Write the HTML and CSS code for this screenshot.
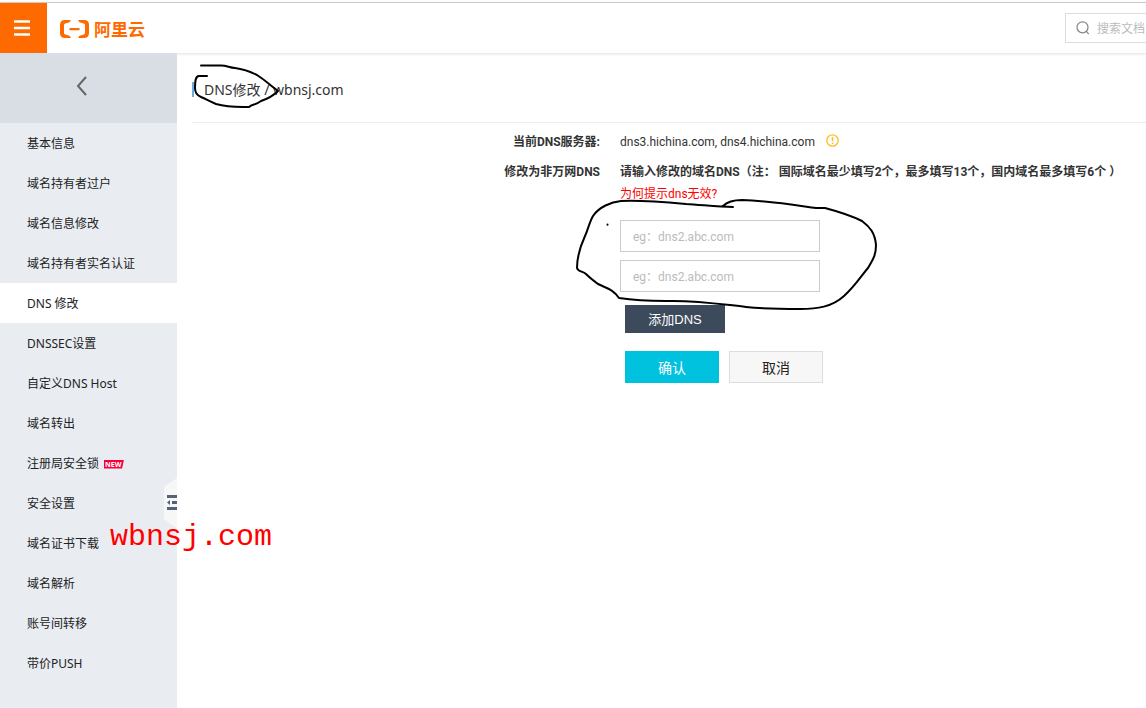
FILE: index.html
```html
<!DOCTYPE html>
<html lang="zh-CN">
<head>
<meta charset="utf-8">
<title>DNS修改</title>
<link rel="stylesheet" href="styles.css">
</head>
<body>
<header class="topbar">
  <button class="menu-btn" aria-label="菜单"><svg width="16" height="16" viewBox="0 0 16 16"><path d="M0 1.500h16M0 8h16M0 14.500h16" stroke="#fff" stroke-width="2.400"/></svg></button>
  <a class="logo" href="#">
    <svg width="30" height="18" viewBox="0 0 30 18" fill="#ff6a00"><path d="M11 0H5Q0 0 0 5v8q0 5 5 5h6l-1.500-2.300-4.200-1.100Q4 14.200 4 13V5q0-1.200 1.300-1.600l4.200-1.100zM18 0h6q5 0 5 5v8q0 5-5 5h-6l1.500-2.300 4.200-1.100Q25 14.200 25 13V5q0-1.200-1.300-1.600l-4.200-1.100zM9.500 8h10v2.200h-10z"/></svg>
    <span class="logo-name">阿里云</span>
  </a>
  <label class="search">
    <svg width="14" height="14" viewBox="0 0 14 14" fill="none" stroke="#888" stroke-width="1.300"><circle cx="6.500" cy="6.300" r="5.500"/><path d="M10.200 10.200l2.500 2.900"/></svg>
    <input class="search-input" type="text" placeholder="搜索文档" aria-label="搜索文档">
  </label>
</header>
<div class="layout">
  <aside class="sidebar">
    <button class="back" aria-label="返回"><svg width="12" height="20" viewBox="0 0 12 20" fill="none" stroke="#666" stroke-width="2"><path d="M10 1L2 10l8 9"/></svg></button>
    <nav class="nav">
      <a class="nav-item" href="#">基本信息</a>
      <a class="nav-item" href="#">域名持有者过户</a>
      <a class="nav-item" href="#">域名信息修改</a>
      <a class="nav-item" href="#">域名持有者实名认证</a>
      <a class="nav-item active" href="#">DNS 修改</a>
      <a class="nav-item" href="#">DNSSEC设置</a>
      <a class="nav-item" href="#">自定义DNS Host</a>
      <a class="nav-item" href="#">域名转出</a>
      <a class="nav-item" href="#">注册局安全锁 <span class="new">NEW</span></a>
      <a class="nav-item" href="#">安全设置</a>
      <a class="nav-item" href="#">域名证书下载</a>
      <a class="nav-item" href="#">域名解析</a>
      <a class="nav-item" href="#">账号间转移</a>
      <a class="nav-item" href="#">带价PUSH</a>
    </nav>
    <button class="collapse" aria-label="收起"><svg width="13" height="50" viewBox="0 0 13 50"><path d="M0 9L13 0v50L0 41z" fill="#f7f7f7"/><path d="M3 17h10v3H3zM8 23h5v3H8zM3 29h10v3H3zM3 24.500l3-2.500v5z" fill="#546478"/></svg></button>
  </aside>
  <main class="main">
    <div class="heading"><h1 class="title">DNS修改 / wbnsj.com</h1></div>
    <form class="form">
      <span class="label">当前DNS服务器:</span>
      <div class="value">dns3.hichina.com, dns4.hichina.com
        <svg class="warn" width="13" height="13" viewBox="0 0 13 13"><circle cx="6.500" cy="6.500" r="5.700" fill="none" stroke="#fdbc2c" stroke-width="1.300"/><path d="M6.500 3v4.300M6.500 8.600v1.500" stroke="#fdbc2c" stroke-width="1.600"/></svg></div>
      <span class="label">修改为非万网DNS</span>
      <div class="value">
        <strong class="note">请输入修改的域名DNS（注： 国际域名最少填写2个，最多填写13个，国内域名最多填写6个 ）</strong>
        <a class="why" href="#">为何提示dns无效?</a>
        <div class="fields">
          <input class="field" type="text" placeholder="eg：dns2.abc.com" aria-label="DNS 1">
          <input class="field" type="text" placeholder="eg：dns2.abc.com" aria-label="DNS 2">
        </div>
        <div class="actions">
          <button class="btn add" type="button">添加DNS</button>
          <div class="pair">
            <button class="btn ok" type="button">确认</button>
            <button class="btn cancel" type="button">取消</button>
          </div>
        </div>
      </div>
    </form>
  </main>
</div>
<svg class="ink" width="900" height="330" viewBox="0 0 900 330" fill="none" stroke="#000" stroke-width="2" stroke-linecap="round" stroke-linejoin="round">
  <path d="M201 65.500h20c6 0 8 2 14 2.500 8 1 16 4 22 7 8 5 14 11 21 16-5 5-11 8-17 10-5 4-9 3-12 6h-6c-12 0-20-1-27-3-7-3-10-5-15-7-5-2-6-5-6-9 0-5 0-12 4-12h8"/>
  <path d="M733 207c-15 0-30-2-47-3-22-2-45-4-65-3-10 1-22 6-28 15-4 7-5 14-8 20-5 11-8 20-8 32 1 4 6 3 9 6 4 4 8 7 12 10 8 4 15 5 21 14 13 2 27 3 47 3 30-1 53 3 80 6 18 2 36 2 54 2 17 0 32-2 44-13 12-11 17-20 24-28 6-10 8-14 8-23-1-12-6-18-14-24-12-6-22-9-37-13h-9c-22-3-46-7-74-8-10 0-15 2-19 6"/>
  <path d="M607.500 224.500v.300"/>
</svg>
<div class="stamp">wbnsj.com</div>
</body>
</html>
```
FILE: styles.css
```css
* { box-sizing: border-box; }
body {
  margin: 0;
  min-height: 100vh;
  display: flex;
  flex-direction: column;
  padding-top: 2px;
  font: 12px/20px "Noto Sans", "Noto Sans CJK SC", sans-serif;
  color: #333;
  background: #fff;
  overflow-x: hidden;
  position: relative;
}
button { border: 0; padding: 0; margin: 0; font: inherit; cursor: pointer; }
a { text-decoration: none; color: inherit; }
.topbar {
  display: flex;
  height: 51px;
  border-top: 1px solid #ccc;
  box-shadow: 0 1px 3px rgba(0, 0, 0, .12);
  position: relative;
}
.menu-btn {
  width: 47px;
  background: #ff6a00;
  display: grid;
  place-items: center;
  padding-right: 3px;
}
.logo {
  display: flex;
  align-items: center;
  gap: 4px;
  padding: 2px 0 0 13px;
  color: #ff6a00;
}
.logo-name { font: 700 17px/20px "Noto Sans CJK SC", sans-serif; }
.search {
  margin: 10px 0 0 auto;
  width: 81px;
  height: 30px;
  display: flex;
  align-items: center;
  gap: 7px;
  padding-left: 10px;
  border: 1px solid #ddd;
  border-right: 0;
  overflow: hidden;
}
.search svg { flex: none; }
.search-input { border: 0; padding: 2px 0 0; outline: 0; width: 80px; flex: none; font: inherit; }
::placeholder { color: #bbb; opacity: 1; }
.layout { flex: 1; display: flex; }
.sidebar { width: 177px; flex: none; background: #e9edf2; color: #222; position: relative; }
.back { width: 100%; height: 70px; background: #d9dde4; padding: 0 13px 5px 0; display: grid; place-items: center; }
.nav-item { display: flex; align-items: center; gap: 5px; height: 40px; padding: 2px 0 0 27px; }
.active { background: #fff; }
.new {
  width: 20px;
  height: 9px;
  background: #f8003c;
  clip-path: polygon(0 0, 100% 0, 90% 100%, 0 100%);
  color: #fff;
  font: 700 7px/9px "Open Sans", sans-serif;
  padding-left: 1px;
}
.collapse { position: absolute; right: 0; top: 425px; background: none; display: flex; }
.main { flex: 1; min-width: 0; padding-left: 15px; }
.heading { padding: 29px 0 25px; border-bottom: 1px solid #eee; }
.title {
  margin: 0;
  padding-left: 10px;
  border-left: 2px solid #6cacdf;
  font-size: 14px;
  line-height: 15px;
  font-weight: 400;
}
.form {
  display: grid;
  grid-template-columns: 408px 1fr;
  gap: 10px 20px;
  padding-top: 9px;
  font-family: Roboto, "Noto Sans CJK SC", sans-serif;
}
.label { text-align: right; font-weight: 700; }
.warn { vertical-align: -1px; margin-left: 8px; }
.note, .why { display: block; white-space: nowrap; }
.why { color: #f00; margin-top: 2px; }
.fields { display: flex; flex-direction: column; gap: 8px; margin-top: 16px; }
.field { width: 200px; height: 32px; border: 1px solid #ccc; padding: 2px 12px 0; font: inherit; }
.actions { margin: 13px 0 0 5px; display: flex; flex-direction: column; gap: 18px; align-items: flex-start; }
.pair { display: flex; gap: 10px; }
.btn { width: 94px; height: 32px; padding-top: 2px; font: 14px/20px "Liberation Sans", "Noto Sans CJK SC", sans-serif; }
.add { width: 100px; height: 28px; background: #3c4a5b; color: #fff; font-size: 13px; }
.ok { background: #00c1de; color: #fff; }
.cancel { background: #f7f7f7; border: 1px solid #ddd; color: #222; }
.ink { position: absolute; left: 0; top: 0; pointer-events: none; }
.stamp {
  position: absolute;
  left: 110px;
  top: 517px;
  font: 30px/40px "Liberation Mono", monospace;
  color: #f00;
}
```
